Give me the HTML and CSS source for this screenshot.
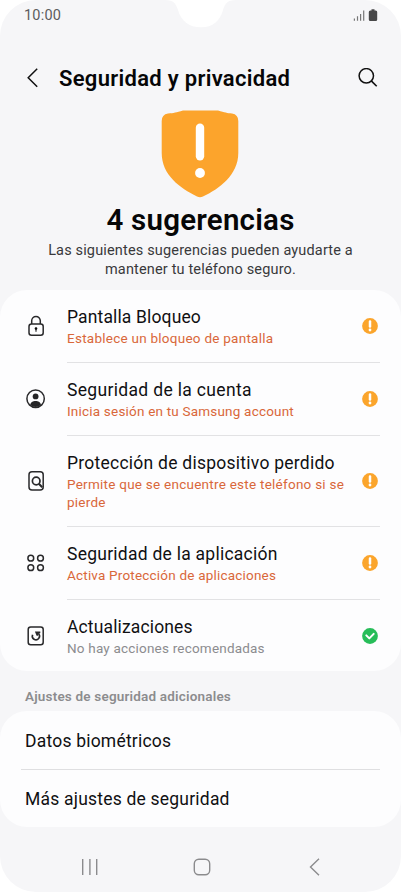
FILE: index.html
```html
<!DOCTYPE html>
<html lang="es">
<head>
<meta charset="utf-8">
<title>Seguridad y privacidad</title>
<link rel="stylesheet" href="styles.css">
</head>
<body>
<svg class="defs" width="0" height="0" aria-hidden="true">
  <symbol id="warn" viewBox="0 0 16 16"><circle cx="8" cy="8" r="7.9" fill="#fba52c"/><path d="M8 3.6v4.9" stroke="#fff" stroke-width="2.5" stroke-linecap="round"/><circle cx="8" cy="12" r="1.4" fill="#fff"/></symbol>
</svg>
<main class="phone">
  <svg class="notch" viewBox="0 0 80 28"><path d="M0 0C9 0 11 4 13 10C16 21 24 27.3 36 27.3S55 21 58 10C60 4 62 0 71 0Z" fill="#fff"/></svg>
  <div class="status">
    <span class="time">10:00</span>
    <svg width="26" height="14" viewBox="0 0 26 14"><path d="M1.4 9.5v2.2M4.5 7.3v4.4M7.6 5v6.7M10.7 1.5v10.2" stroke="#777" stroke-width="1.2" fill="none"/><path d="M18.5.3h3v1.3h1.2q1.5 0 1.5 1.5v7.4q0 1.5-1.5 1.5h-5.4q-1.5 0-1.5-1.5V3.1q0-1.5 1.5-1.5h1.2z" fill="#484849"/></svg>
  </div>
  <header class="bar">
    <svg width="12" height="20" viewBox="0 0 12 20"><path d="M11.2 .8L2.2 9.8L11.2 18.8" fill="none" stroke="#111" stroke-width="1.5"/></svg>
    <h1>Seguridad y privacidad</h1>
    <svg width="20" height="20" viewBox="0 0 20 20"><circle cx="8.3" cy="7.8" r="7.2" fill="none" stroke="#111" stroke-width="1.5"/><path d="M13.3 12.9L18.7 18.3" stroke="#111" stroke-width="1.6"/></svg>
  </header>
  <section class="hero">
    <svg class="shield" width="78" height="88" viewBox="0 0 78 88"><path d="M22 .5H57C64 2.3 66 3.2 71 3.5Q77.3 4.5 77.3 11V43C77.3 65 58 79 42 86.5Q39 87.9 36 86.5C19 78 .7 65 .7 43V11Q.7 4.5 7 3.5C13 3.2 15 2.3 22 .5Z" fill="#fca42c"/><path d="M39 17.7v28.6" stroke="#fff" stroke-width="8.4" stroke-linecap="round"/><circle cx="39" cy="63" r="4.9" fill="#fff"/></svg>
    <h2>4 sugerencias</h2>
    <p>Las siguientes sugerencias pueden ayudarte a<br>mantener tu teléfono seguro.</p>
  </section>
  <section class="card">
    <div class="row">
      <svg class="icon" viewBox="0 0 22 22"><g fill="none" stroke="#29292b" stroke-width="1.5"><rect x="4" y="9" width="14.2" height="11.3" rx="2.5"/><path d="M6.7 9V5.7a4.3 4.3 0 0 1 8.6 0V9"/></g><circle cx="11" cy="13.6" r="1.3"/><path d="M11 13.6v3.2" stroke="#29292b" stroke-width="1.2"/></svg>
      <div class="text"><h3 class="t1">Pantalla Bloqueo</h3><p class="s1">Establece un bloqueo de pantalla</p></div>
      <svg class="state"><use href="#warn"/></svg>
    </div>
    <div class="row">
      <svg class="icon" viewBox="0 0 22 22"><circle cx="10.6" cy="10.7" r="8.7" fill="none" stroke="#29292b" stroke-width="1.5"/><circle cx="10.6" cy="8.4" r="2.9" fill="#242426"/><path d="M5.3 17C5.5 11.7 15.7 11.7 15.9 17Q10.6 21 5.3 17Z" fill="#242426"/></svg>
      <div class="text"><h3 class="t2">Seguridad de la cuenta</h3><p>Inicia sesión en tu Samsung account</p></div>
      <svg class="state"><use href="#warn"/></svg>
    </div>
    <div class="row">
      <svg class="icon" viewBox="0 0 22 22"><g fill="none" stroke="#29292b" stroke-width="1.5"><rect x="4" y="1.7" width="14.2" height="18.3" rx="3"/><circle cx="11.2" cy="11" r="3.8" stroke-width="1.7"/><path d="M13.9 13.7l3.3 3.5" stroke-width="2"/></g></svg>
      <div class="text"><h3>Protección de dispositivo perdido</h3><p class="s3">Permite que se encuentre este teléfono si se<br>pierde</p></div>
      <svg class="state"><use href="#warn"/></svg>
    </div>
    <div class="row">
      <svg class="icon" viewBox="0 0 22 22"><g fill="none" stroke="#29292b" stroke-width="1.5"><circle cx="5.8" cy="6.2" r="2.9"/><circle cx="15.5" cy="6.2" r="2.9"/><circle cx="5.8" cy="15.7" r="2.9"/><circle cx="15.5" cy="15.7" r="2.9"/></g></svg>
      <div class="text"><h3>Seguridad de la aplicación</h3><p>Activa Protección de aplicaciones</p></div>
      <svg class="state"><use href="#warn"/></svg>
    </div>
    <div class="row">
      <svg class="icon" viewBox="0 0 22 22"><g fill="none" stroke="#29292b" stroke-width="1.5"><rect x="3.2" y="1.9" width="15" height="17.9" rx="2.5"/><path d="M7.6 9.8A3.6 3.6 0 1 0 13.6 8.8" stroke-width="1.6"/></g><path d="M9.9 6.4h5.4v1.5l-2.2 1.3v1.6h-1.5z" fill="#29292b"/></svg>
      <div class="text"><h3 class="t5">Actualizaciones</h3><p class="muted">No hay acciones recomendadas</p></div>
      <svg class="state" viewBox="0 0 16 16"><circle cx="8" cy="8" r="7.9" fill="#27bd59"/><path d="M4.3 7.4l3 3 4.4-4.5" fill="none" stroke="#fff" stroke-width="2" stroke-linecap="round" stroke-linejoin="round"/></svg>
    </div>
  </section>
  <h4 class="label">Ajustes de seguridad adicionales</h4>
  <section class="card extra">
    <div class="item">Datos biométricos</div>
    <div class="item">Más ajustes de seguridad</div>
  </section>
  <nav class="nav">
    <svg width="18" height="18" viewBox="0 0 18 18"><path d="M1.7 1v16M8.9 1v16M15.7 1v16" stroke="#8b8b8d" stroke-width="1.4"/></svg>
    <svg width="18" height="18" viewBox="0 0 18 18"><rect x="1.3" y="1.3" width="15.4" height="15.4" rx="4.5" fill="none" stroke="#8b8b8d" stroke-width="1.4"/></svg>
    <svg width="18" height="18" viewBox="0 0 18 18"><path d="M13 .8L4.5 9L13 17.2" fill="none" stroke="#8b8b8d" stroke-width="1.4"/></svg>
  </nav>
</main>
</body>
</html>
```
FILE: styles.css
```css
* { box-sizing: border-box; margin: 0; padding: 0; }
body { background: #fff; font-family: Roboto, "Liberation Sans", sans-serif; color: #101012; }
.defs { position: absolute; }
.phone { position: relative; width: 401px; height: 892px; background: #f6f6f8; border-radius: 36px; overflow: hidden; display: flex; flex-direction: column; }
.notch { position: absolute; left: 165px; top: 0; width: 80px; height: 28px; }
.status { height: 31px; display: flex; justify-content: space-between; align-items: center; padding: 0 22px 0 24px; }
.time { font-size: 14.5px; letter-spacing: .2px; color: #5c5c5e; }
.bar { height: 79px; display: flex; align-items: center; padding: 14px 23.5px 0 26px; }
h1 { flex: 1; margin-left: 21px; padding-top: 2px; font-size: 22px; font-weight: 600; line-height: 28px; letter-spacing: .3px; color: #060607; white-space: nowrap; }
.hero { height: 180px; display: flex; flex-direction: column; align-items: center; text-align: center; }
.shield { flex: none; margin-right: 1px; }
h2 { font-size: 29.5px; font-weight: 600; line-height: 36px; letter-spacing: .22px; margin-top: 4px; color: #060607; white-space: nowrap; }
.hero p { font-size: 14.5px; line-height: 19px; letter-spacing: .16px; margin-top: 3px; color: #39393b; white-space: nowrap; }
.card { background: #fdfdfe; border-radius: 27px; height: 381px; flex: none; }
.row { display: flex; align-items: center; height: 73px; padding: 0 23px 0 25px; position: relative; }
.row:first-child { height: 72px; }
.row:nth-child(3) { height: 91px; }
.icon { width: 22px; height: 22px; flex: none; }
.text { flex: 1; margin-left: 20px; white-space: nowrap; }
.row + .row::before { content: ""; position: absolute; left: 67px; right: 21px; top: 0; height: 1px; background: #e2e2e4; }
h3 { font-size: 17.5px; font-weight: 400; line-height: 23px; padding-top: 2px; letter-spacing: .25px; }
.text p { font-size: 13.5px; line-height: 18.5px; letter-spacing: .2px; color: #d9673a; }
.text p.muted { color: #8c8c8f; }
.t1, .t5 { letter-spacing: .14px; }
.t2 { letter-spacing: .33px; }
.text .s1, .text .s3 { letter-spacing: .25px; }
.state { width: 16px; height: 16px; flex: none; }
.label { height: 40px; flex: none; padding: 11px 0 0 25px; font-size: 13.5px; line-height: 28px; font-weight: 600; letter-spacing: .19px; color: #8c8c8e; }
.extra { height: 116px; }
.item { height: 58px; margin: 0 21px; padding: 1px 4px 0; display: flex; align-items: center; font-size: 17.5px; letter-spacing: .21px; white-space: nowrap; }
.item + .item { border-top: 1px solid #dfdfe1; }
.nav { flex: 1; display: flex; justify-content: space-between; padding: 31px 77px 0 80.5px; }
```
